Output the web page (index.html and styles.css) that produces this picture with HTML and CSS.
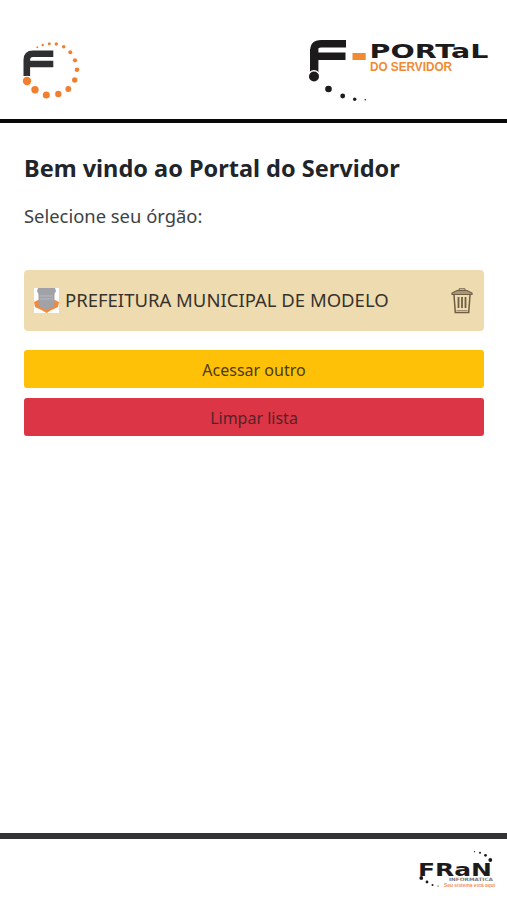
FILE: index.html
```
<!DOCTYPE html>
<html lang="pt-BR">

<head>
    <meta charset="UTF-8">
    <meta name="viewport" content="width=device-width, initial-scale=1.0">
    <title>Portal do Servidor</title>
    <link rel="stylesheet" href="styles.css">
</head>

<body>
    <header class="header">
        <svg class="header__mark" width="60" height="62" viewBox="22 40 60 62">
            <path d="M26.8 76V60q0-6.2 6.2-6.2H53.3M29 64H53.3" fill="none" stroke="#2f2e30" stroke-width="6.6" />
            <g fill="#f08030">
                <circle cx="27" cy="81" r="5.2" fill="#fff" />
                <circle cx="27" cy="81" r="4.2" />
                <circle cx="35" cy="89.7" r="3.7" />
                <circle cx="46.3" cy="95" r="3.5" />
                <circle cx="58.3" cy="94" r="3.2" />
                <circle cx="68.3" cy="89" r="2.9" />
                <circle cx="74.7" cy="80" r="2.7" />
                <circle cx="77" cy="69.7" r="2.3" />
                <circle cx="75" cy="60.3" r="2.1" />
                <circle cx="70.3" cy="52.3" r="2" />
                <circle cx="63.7" cy="46.7" r="1.8" />
                <circle cx="56.3" cy="44" r="1.7" />
                <circle cx="49.3" cy="43.7" r="1.5" />
                <circle cx="42.7" cy="45" r="1.2" />
                <circle cx="37.3" cy="47.3" r="1" />
            </g>
        </svg>
        <svg class="header__logo" width="182" height="64" viewBox="308 38 182 64">
            <path d="M313.8 73V51q0-7.3 7.3-7.3H346M316 56.3H345.5" fill="none" stroke="#1c1a1b" stroke-width="7.4" />
            <path d="M314.2 73V49" stroke="#1c1a1b" stroke-width="8.4" />
            <g fill="#1c1a1b">
                <circle cx="314" cy="76.5" r="6.4" fill="#fff" />
                <circle cx="314" cy="76.5" r="5" />
                <circle cx="328.5" cy="89" r="3.3" />
                <circle cx="342.7" cy="96" r="2.4" />
                <circle cx="354.7" cy="99.3" r="1.7" />
                <circle cx="365.3" cy="99.7" r=".8" />
            </g>
            <rect x="352.5" y="53" width="13.2" height="7" fill="#f08a35" />
            <text class="logo__name" x="369.5" y="57.5" textLength="119" lengthAdjust="spacingAndGlyphs">PORTaL</text>
            <text class="logo__sub" x="370" y="71" textLength="82" lengthAdjust="spacingAndGlyphs">DO SERVIDOR</text>
        </svg>
    </header>

    <main class="content">
        <h1>Bem vindo ao Portal do Servidor</h1>
        <p class="content__text">Selecione seu órgão:</p>

        <div class="orgao">
            <svg class="orgao__brasao" width="25" height="25" viewBox="0 0 25 25">
                <rect width="25" height="25" fill="#fff" />
                <path d="M0 14l4-2h17l4 2-1 5-6.5 3-5 3-5-3L1 19z" fill="#f28a3c" />
                <path d="M4 0h17l1 3-1.500 3V16q0 3-4 4l-4 2-4-2q-4-1-4-4V6L3 3z" fill="#a1a1a8" />
                <path d="M6 8h13M6 11h13" stroke="#b8b8bf" />
            </svg>
            <span class="orgao__nome">PREFEITURA MUNICIPAL DE MODELO</span>
            <svg class="orgao__excluir" width="22" height="26" viewBox="0 0 22 26" fill="none" stroke="#6d5e46">
                <path d="M1 6.5v-1.5l5-2.5h10l5 2.5v1.5z" fill="#a99573" stroke-width="1.2" />
                <path d="M8 2.3V.8h6v1.5" />
                <path d="M3 7l1.300 17.5h13.4L19 7" stroke-width="1.5" />
                <path d="M5.5 22.5h11" stroke="#a28e6b" />
                <path d="M7.5 9v11M11 9v11M14.5 9v11" stroke-width="1.8" />
            </svg>
        </div>

        <button class="btn btn--outro" type="button">Acessar outro</button>
        <button class="btn btn--limpar" type="button">Limpar lista</button>
    </main>

    <footer class="footer">
        <svg width="80" height="40" viewBox="417 849 80 40">
            <text class="fran__name" x="418" y="875.5" textLength="74" lengthAdjust="spacingAndGlyphs">FRaN</text>
            <text class="fran__info" x="449" y="881.3" textLength="44" lengthAdjust="spacingAndGlyphs">INFORMATICA</text>
            <text class="fran__slogan" x="444" y="887" textLength="51" lengthAdjust="spacingAndGlyphs">Seu sistema está aqui</text>
            <g fill="#1c1a1b">
                <circle cx="490.3" cy="860" r="1.9" />
                <circle cx="485.5" cy="855.3" r="1.4" />
                <circle cx="480" cy="852.7" r="1" />
                <circle cx="474.5" cy="851.7" r=".6" />
                <circle cx="421.3" cy="878" r="1.9" />
                <circle cx="427" cy="882" r="1.4" />
                <circle cx="432.5" cy="885" r="1" />
                <circle cx="438" cy="886" r=".6" />
            </g>
        </svg>
    </footer>
</body>

</html>
```

FILE: styles.css
```
* {
    margin: 0;
    padding: 0;
    box-sizing: border-box;
}

body {
    display: flex;
    flex-direction: column;
    height: 100vh;
    background-color: #fff;
    font-family: 'Noto Sans', 'Open Sans', sans-serif;
    color: #212529;
}

.header {
    display: flex;
    justify-content: space-between;
    align-items: flex-start;
    height: 123px;
    padding: 38px 17px 0 22px;
    border-bottom: 4px solid #080808;
}

.header__mark {
    margin-top: 2px;
}

.logo__name {
    font: bold 19px 'DejaVu Sans', sans-serif;
    fill: #1c1a1b;
}

.logo__sub {
    font: bold 12.5px 'Liberation Sans', sans-serif;
    fill: #f08a35;
}

.content {
    display: flex;
    flex-direction: column;
    flex: 1;
    padding: 28px 23px 0 24px;
}

h1 {
    font-size: 23.5px;
    font-weight: bold;
    line-height: 34px;
    white-space: nowrap;
}

.content__text {
    margin-top: 17px;
    font-size: 18.4px;
    line-height: 28px;
    color: #3d4246;
}

.orgao {
    display: flex;
    align-items: center;
    height: 61px;
    margin: 40px 0 19px;
    padding: 0 11px 0 10px;
    border-radius: 4px;
    background-color: #efdbb0;
}

.orgao__nome {
    flex: 1;
    margin-left: 6px;
    padding-bottom: 2px;
    font-size: 18.5px;
    color: #36332c;
    white-space: nowrap;
}

.btn {
    height: 38px;
    margin-bottom: 10px;
    padding-top: 1px;
    border: 0;
    border-radius: 3px;
    font-family: inherit;
    font-size: 16px;
    cursor: pointer;
}

.btn--outro {
    background-color: #ffc107;
    color: #4b3b18;
}

.btn--limpar {
    background-color: #dc3545;
    color: #54232a;
}

.footer {
    display: flex;
    justify-content: flex-end;
    height: 67px;
    padding: 10px 10px 0 0;
    border-top: 6px solid #333335;
}

.fran__name {
    font: bold 18px 'DejaVu Sans', sans-serif;
    fill: #1c1a1b;
}

.fran__info {
    font: bold 4.5px 'DejaVu Sans', sans-serif;
    fill: #77777a;
}

.fran__slogan {
    font: bold 5px 'Liberation Sans', sans-serif;
    fill: #f0935a;
}
```
